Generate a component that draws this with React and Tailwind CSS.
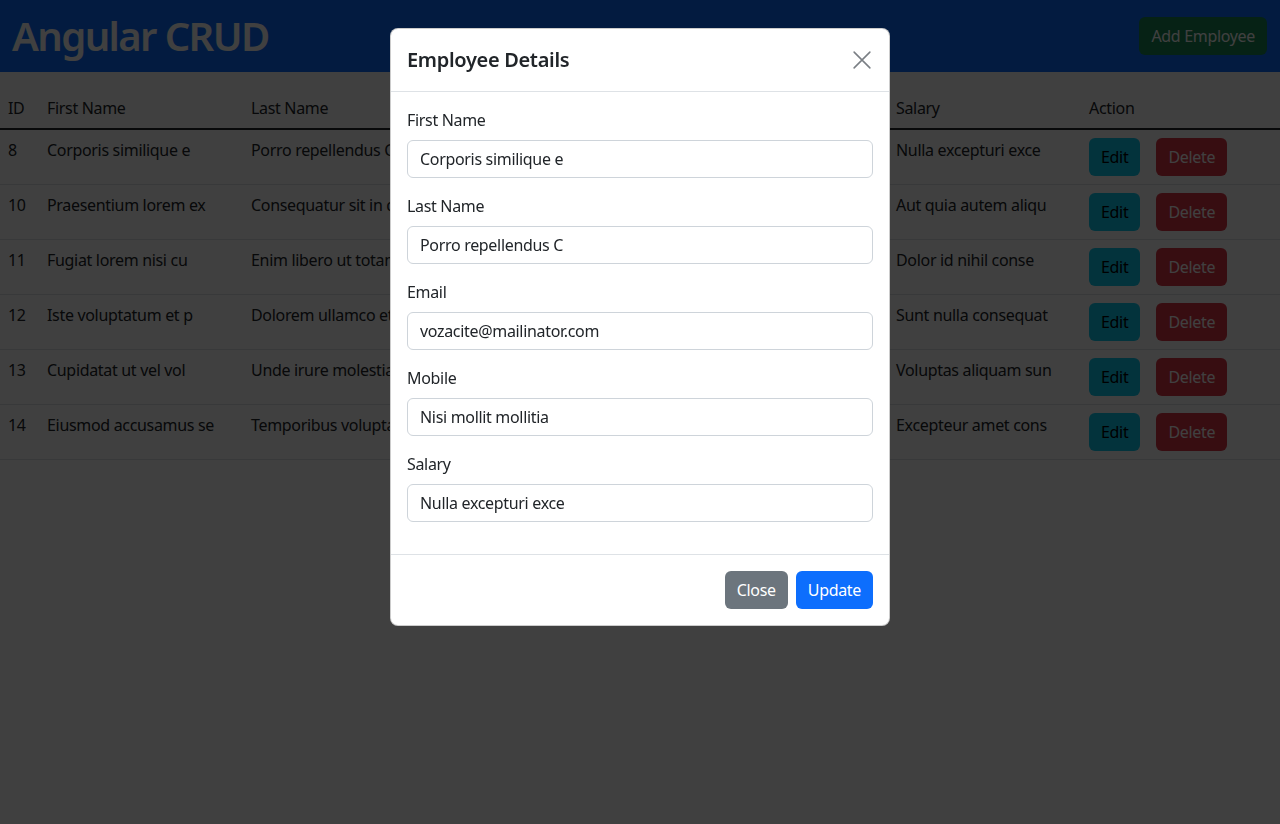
const employees = [
  { id: 8, first: 'Corporis similique e', last: 'Porro repellendus C', email: 'vozacite@mailinator.com', mobile: 'Nisi mollit mollitia', salary: 'Nulla excepturi exce' },
  { id: 10, first: 'Praesentium lorem ex', last: 'Consequatur sit in q', email: 'rybuhu@mailinator.com', mobile: 'Quis eum ut qui', salary: 'Aut quia autem aliqu' },
  { id: 11, first: 'Fugiat lorem nisi cu', last: 'Enim libero ut totam', email: 'hexiq@mailinator.com', mobile: 'Ad nulla proident', salary: 'Dolor id nihil conse' },
  { id: 12, first: 'Iste voluptatum et p', last: 'Dolorem ullamco et', email: 'mikyr@mailinator.com', mobile: 'Sed in est eum', salary: 'Sunt nulla consequat' },
  { id: 13, first: 'Cupidatat ut vel vol', last: 'Unde irure molestias', email: 'pefo@mailinator.com', mobile: 'Minim est velit', salary: 'Voluptas aliquam sun' },
  { id: 14, first: 'Eiusmod accusamus se', last: 'Temporibus volupta', email: 'zoxa@mailinator.com', mobile: 'Ut in ipsum', salary: 'Excepteur amet cons' },
]

const fields = [
  { label: 'First Name', value: 'Corporis similique e' },
  { label: 'Last Name', value: 'Porro repellendus C' },
  { label: 'Email', value: 'vozacite@mailinator.com' },
  { label: 'Mobile', value: 'Nisi mollit mollitia' },
  { label: 'Salary', value: 'Nulla excepturi exce' },
]

export default function App() {
  return (
    <div className="min-h-screen bg-white text-[16px] leading-6 tracking-[-0.02em] text-[#212529] font-['Segoe_UI','Noto_Sans',sans-serif]">
      {/* Navbar */}
      <div className="flex h-[72px] items-center justify-between bg-[#0d6efd] pl-3 pr-[13px]">
        <h1 className="text-[40px] font-semibold leading-[1.2] tracking-[-0.04em] text-white">Angular CRUD</h1>
        <button className="h-[38px] rounded-md bg-[#198754] px-3 text-white">Add Employee</button>
      </div>

      {/* Table */}
      <table className="mt-4 w-full table-fixed border-collapse text-left">
        <colgroup>
          <col className="w-[39px]" />
          <col className="w-[204px]" />
          <col className="w-[215px]" />
          <col className="w-[215px]" />
          <col className="w-[215px]" />
          <col className="w-[193px]" />
          <col className="w-[199px]" />
        </colgroup>
        <thead>
          <tr>
            <th className="p-2 font-normal">ID</th>
            <th className="p-2 font-normal">First Name</th>
            <th className="p-2 font-normal">Last Name</th>
            <th className="p-2 font-normal">Email</th>
            <th className="p-2 font-normal">Mobile</th>
            <th className="p-2 font-normal">Salary</th>
            <th className="p-2 font-normal">Action</th>
          </tr>
        </thead>
        <tbody className="border-t-2 border-[#212529]">
          {employees.map((e) => (
            <tr key={e.id} className="border-b border-[#dee2e6] align-top">
              <td className="p-2 whitespace-nowrap overflow-hidden">{e.id}</td>
              <td className="p-2 whitespace-nowrap overflow-hidden">{e.first}</td>
              <td className="p-2 whitespace-nowrap overflow-hidden">{e.last}</td>
              <td className="p-2 whitespace-nowrap overflow-hidden">{e.email}</td>
              <td className="p-2 whitespace-nowrap overflow-hidden">{e.mobile}</td>
              <td className="p-2 whitespace-nowrap overflow-hidden">{e.salary}</td>
              <td className="p-2">
                <div className="flex gap-4">
                  <button className="h-[38px] rounded-md bg-[#0dcaf0] px-3 text-black">Edit</button>
                  <button className="h-[38px] rounded-md bg-[#dc3545] px-3 text-white">Delete</button>
                </div>
              </td>
            </tr>
          ))}
        </tbody>
      </table>

      {/* Modal */}
      <div className="fixed inset-0 flex items-start justify-center bg-black/75 pt-7">
        <div className="w-[500px] rounded-lg border border-black/20 bg-white">
          <div className="flex items-center justify-between border-b border-[#dee2e6] py-4 pl-4 pr-[15px]">
            <h5 className="text-[20px] font-semibold leading-[30px]">Employee Details</h5>
            <button className="flex h-6 w-6 items-center justify-center">
              <svg width="18" height="18" viewBox="0 0 16 16" fill="none" stroke="#7a7f84" strokeWidth="1.4" strokeLinecap="round">
                <path d="M1 1l14 14M15 1L1 15" />
              </svg>
            </button>
          </div>
          <div className="p-4">
            {fields.map((f) => (
              <div key={f.label} className="mb-4">
                <label className="mb-2 block">{f.label}</label>
                <input
                  readOnly
                  value={f.value}
                  className="block h-[38px] w-full rounded-md border border-[#ced4da] px-3 tracking-[-0.02em] text-[#212529] outline-none"
                />
              </div>
            ))}
          </div>
          <div className="flex justify-end gap-2 border-t border-[#dee2e6] p-4">
            <button className="h-[38px] rounded-md bg-[#6c757d] px-3 text-white">Close</button>
            <button className="h-[38px] rounded-md bg-[#0d6efd] px-3 text-white">Update</button>
          </div>
        </div>
      </div>
    </div>
  )
}
